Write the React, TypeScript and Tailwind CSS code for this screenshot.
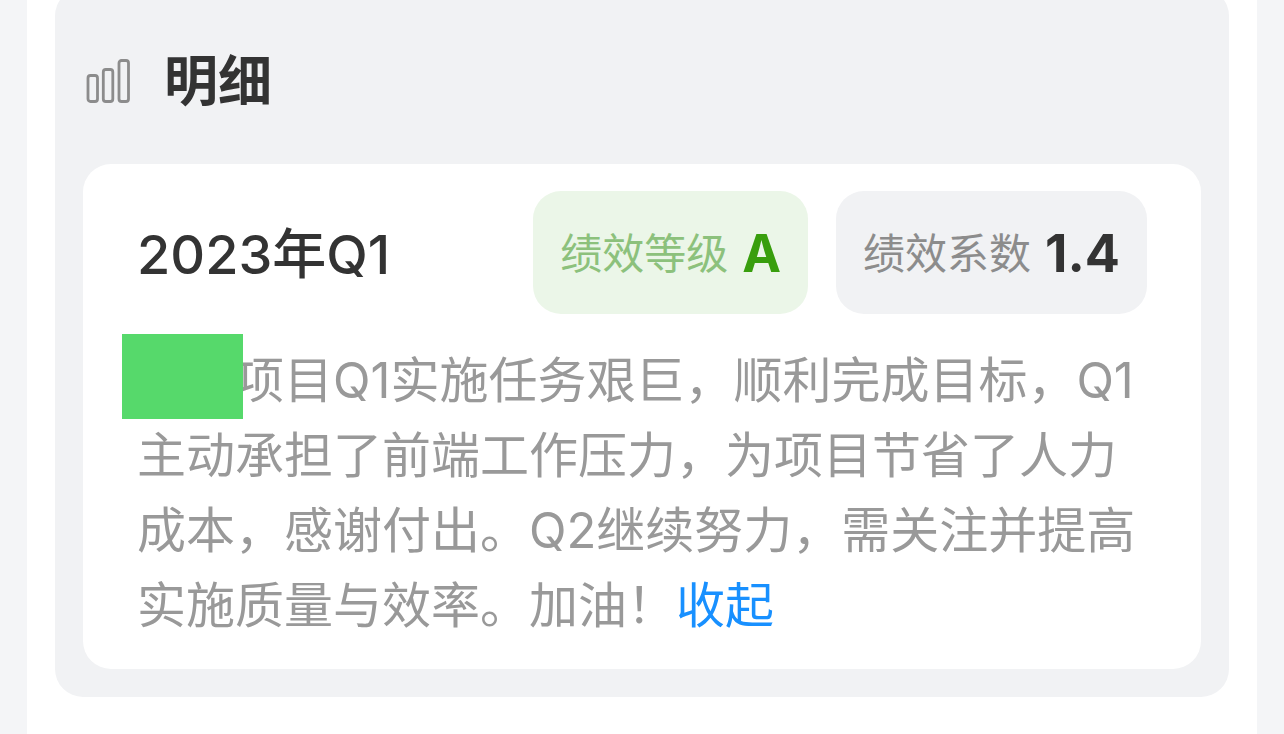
import { useState } from 'react';

const bars = [
  { x: 2, y: 17, height: 26 },
  { x: 17.3, y: 11, height: 32 },
  { x: 33, y: 2, height: 41 },
];

function BarsIcon() {
  return (
    <svg className="h-[46px] w-[46px] shrink-0" viewBox="0 0 46 46" fill="none" stroke="#8c8c8c" strokeWidth="2.8" aria-hidden="true">
      {bars.map((bar) => (
        <rect key={bar.x} x={bar.x} y={bar.y - 0.5} width="9.5" height={bar.height} rx="2.5" />
      ))}
    </svg>
  );
}

export default function App() {
  const [expanded, setExpanded] = useState(true);

  return (
    <div className="min-h-screen bg-[#f4f5f7] px-[27px] font-['Inter','Noto_Sans_CJK_SC',sans-serif]">
      <main className="flow-root min-h-screen bg-white px-7">
        <section className="-mt-3 rounded-[28px] bg-[#f1f2f4] px-7 pt-[54px] pb-7">
          <header className="flex h-20 items-center gap-8 pl-[3px]">
            <BarsIcon />
            <h1 className="text-[54px] leading-[80px] font-semibold text-[#333]">明细</h1>
          </header>

          <article className="mt-[42px] rounded-[28px] bg-white px-[54px] pt-[27px] pb-[26px]">
            <div className="flex items-center gap-7">
              <h2 className="flex-1 pt-1 text-[54px] leading-[80px] font-medium whitespace-nowrap text-[#333]">2023年Q1</h2>
              <div className="flex h-[123px] items-center gap-3.5 rounded-[28px] bg-[#ebf6e8] px-[27px] pt-0.5 whitespace-nowrap">
                <span className="text-[42px] text-[#8cc17c]">绩效等级</span>
                <strong className="text-[52px] font-bold text-[#389e0d]">A</strong>
              </div>
              <div className="flex h-[123px] items-center gap-3.5 rounded-[28px] bg-[#f1f2f4] px-[27px] pt-0.5 whitespace-nowrap">
                <span className="text-[42px] text-[#8c8c8c]">绩效系数</span>
                <strong className="text-[52px] font-bold text-[#333]">1.4</strong>
              </div>
            </div>

            <div className="relative mt-[29px]">
              <div className="text-[49px] leading-[75px] text-[#999]">
                <p className="inline">
                  <span className="inline-block w-[98px]" />
                  项目Q1实施任务艰巨，顺利完成目标，Q1
                  {expanded && '主动承担了前端工作压力，为项目节省了人力成本，感谢付出。Q2继续努力，需关注并提高实施质量与效率。加油！'}
                </p>
                <button type="button" className="text-[#1890ff]" onClick={() => setExpanded(!expanded)}>
                  {expanded ? '收起' : '展开'}
                </button>
              </div>
              <span className="absolute -top-[9px] -left-[15px] h-[85px] w-[121px] bg-[#56d96b]" />
            </div>
          </article>
        </section>
      </main>
    </div>
  );
}
